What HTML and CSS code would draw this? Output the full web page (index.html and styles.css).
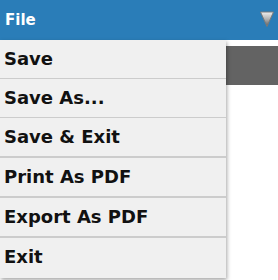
FILE: index.html
```html
<!DOCTYPE html>
<html>
<head>
<meta charset="utf-8">
<link rel="stylesheet" href="styles.css">
</head>
<body>
<div class="bar">
  <span class="title">File</span>
  <svg class="caret" width="14" height="16" viewBox="0 0 14 16">
    <defs>
      <linearGradient id="g" x1="0" y1="0" x2="0" y2="1">
        <stop offset="0" stop-color="#f0f0f0"/>
        <stop offset="0.5" stop-color="#b0b0b0"/>
        <stop offset="1" stop-color="#5a5a5a"/>
      </linearGradient>
    </defs>
    <polygon points="0.5,1 13.5,1 7,15.5" fill="url(#g)" stroke="#7a7a7a" stroke-width="1"/>
  </svg>
</div>
<div class="stage">
  <div class="toolbar"></div>
  <ul class="menu">
    <li class="item">Save</li>
    <li class="item">Save As...</li>
    <li class="item group-end">Save &amp; Exit</li>
    <li class="item group-end">Print As PDF</li>
    <li class="item group-end">Export As PDF</li>
    <li class="item last">Exit</li>
  </ul>
</div>
</body>
</html>
```
FILE: styles.css
```css
html, body {
  margin: 0;
  padding: 0;
  background: #ffffff;
  font-family: "DejaVu Sans", Verdana, sans-serif;
}
.bar {
  height: 40px;
  background: #2a7db8;
  display: flex;
  align-items: center;
  justify-content: space-between;
  padding: 0 4px 0 5px;
}
.title {
  color: #ffffff;
  font-weight: bold;
  font-size: 15px;
}
.caret {
  margin-top: -2px;
}
.stage {
  position: relative;
  height: 234px;
  padding-top: 6px;
}
.toolbar {
  margin-left: 226px;
  height: 39px;
  background: #636363;
}
.menu {
  position: absolute;
  left: 0;
  top: 0;
  width: 226px;
  margin: 0;
  padding: 0;
  list-style: none;
  background: #f0f0f0;
  box-shadow: 1px 2px 4px rgba(0,0,0,0.35);
}
.item {
  height: 38px;
  line-height: 38px;
  padding-left: 4px;
  font-size: 18px;
  font-weight: bold;
  color: #111111;
  border-bottom: 1px solid #cccccc;
}
.item.group-end {
  border-bottom: 2px solid #cccccc;
}
.item.last {
  border-bottom: none;
  height: 40px;
}
```
